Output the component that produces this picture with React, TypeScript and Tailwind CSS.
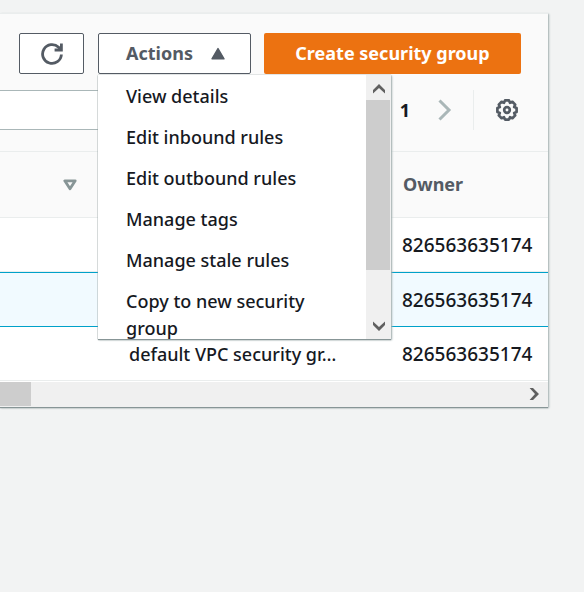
import { useState } from "react";

const menuItems = [
  "View details",
  "Edit inbound rules",
  "Edit outbound rules",
  "Manage tags",
  "Manage stale rules",
  "Copy to new security group",
];

const groups = [
  { id: 1, description: "", owner: "826563635174" },
  { id: 2, description: "", owner: "826563635174" },
  { id: 3, description: "default VPC security gr…", owner: "826563635174" },
];

const RefreshIcon = () => (
  <svg width="22" height="22" viewBox="0 0 22 22" fill="none" stroke="currentColor" strokeWidth="2.8">
    <path d="M20.4 11.5A9.4 9.4 0 1 1 17.6 4.3L20 6.8" />
    <path d="M20.4 0.5V7H13.6" />
  </svg>
);

const GearIcon = () => (
  <svg width="22" height="22" viewBox="0 0 22 22" fill="none" stroke="currentColor" strokeWidth="2.7" strokeLinejoin="round">
    <path d="M9 1.4H13L14 3.8L16.4 2.8L19.2 5.6L18.2 8L20.6 9V13L18.2 14L19.2 16.4L16.4 19.2L14 18.2L13 20.6H9L8 18.2L5.6 19.2L2.8 16.4L3.8 14L1.4 13V9L3.8 8L2.8 5.6L5.6 2.8L8 3.8Z" />
    <circle cx="11" cy="11" r="2.8" />
  </svg>
);

// arrow used on the ends of both scrollbars, points up by default
const ScrollArrow = ({ className = "" }: { className?: string }) => (
  <svg className={className} width="12" height="10" viewBox="0 0 12 10" fill="#606060">
    <path d="M6 0L12 6V9.4L6 4L0 9.4V6z" />
  </svg>
);

const ActionsMenu = () => (
  <div className="absolute left-0 top-full z-10 mt-px flex h-[264px] w-[293px] overflow-hidden bg-white shadow-[0_1px_1px_0_#879596,1px_1px_2px_0_#aab7b8,0_0_1px_0_#879596]">
    <ul role="menu" className="flex-1 overflow-hidden pt-px">
      {menuItems.map((item) => (
        <li key={item} role="none">
          <button role="menuitem" className="block w-full px-7 py-[7px] text-left text-[18px] font-medium leading-[27px] text-[#16191f]">
            {item}
          </button>
        </li>
      ))}
    </ul>
    <div className="flex w-[25px] flex-col bg-[#f0f0f0]">
      <button aria-label="Scroll up" className="grid h-[25px] place-items-center pt-0.5">
        <ScrollArrow />
      </button>
      <div className="mr-px h-[170px] bg-[#cdcdcd]" />
      <button aria-label="Scroll down" className="mt-auto grid h-[25px] place-items-center pb-px">
        <ScrollArrow className="rotate-180" />
      </button>
    </div>
  </div>
);

const App = () => {
  const [open, setOpen] = useState<boolean>(true);
  const [selected, setSelected] = useState<number>(2);

  return (
    <div className="min-h-screen bg-[#f2f3f3] pr-9 pt-[13px] font-['Noto_Sans','Open_Sans',sans-serif] text-[#16191f]">
      <section className="border-t border-[#eaeded] bg-white shadow-[0_1px_1px_0_#879596,1px_1px_2px_0_#aab7b8]">
        <header className="bg-[#fafafa] pb-[21px] pt-[19px]">
          <div className="flex justify-end pr-[27px]">
            <button aria-label="Refresh" className="mr-3.5 grid h-[41px] w-[65px] place-items-center rounded-xs border border-[#545b64] bg-white text-[#545b64]">
              <RefreshIcon />
            </button>
            <div className="relative mr-[13px]">
              <button
                aria-expanded={open}
                onClick={() => setOpen(!open)}
                className="flex h-[41px] w-[153px] items-center justify-between rounded-xs border border-[#545b64] bg-white pl-[27px] pr-6 text-[18px] font-bold text-[#545b64]"
              >
                Actions
                <svg width="16" height="14" viewBox="0 0 16 14" fill="currentColor" stroke="currentColor" strokeWidth="1.4" strokeLinejoin="round">
                  <path d="M8 1.6L14 11.8H2z" />
                </svg>
              </button>
              {open && <ActionsMenu />}
            </div>
            <button className="h-[41px] w-[257px] rounded-xs bg-[#ec7211] text-[18px] font-bold text-white">Create security group</button>
          </div>
          <div className="mt-4 flex items-center pr-[30px]">
            <input aria-label="Filter security groups" className="h-10 min-w-0 flex-1 border-y border-[#aab7b8] bg-white px-3 text-[18px]" />
            <span className="ml-6 text-[18px] font-bold">1</span>
            <button aria-label="Next page" className="ml-7 text-[#aab7b8]">
              <svg width="14" height="22" viewBox="0 0 14 22" fill="none" stroke="currentColor" strokeWidth="3">
                <path d="M1.5 1.5L11 11L1.5 20.5" />
              </svg>
            </button>
            <div className="ml-[21px] mr-[22px] h-10 w-px bg-[#eaeded]" />
            <button aria-label="Preferences" className="text-[#545b64]">
              <GearIcon />
            </button>
          </div>
        </header>
        <table className="w-full table-fixed border-separate border-spacing-0 text-left">
          <thead>
            <tr className="h-[67px] bg-[#fafafa] [&>th]:border-y [&>th]:border-[#eaeded]">
              <th className="w-[98px]">
                <button aria-label="Sort" className="ml-[63px] block text-[#879596]">
                  <svg width="14" height="12" viewBox="0 0 14 12" fill="none" stroke="currentColor" strokeWidth="2.8" strokeLinejoin="round">
                    <path d="M1.8 1.8H12.2L7 9.8z" />
                  </svg>
                </button>
              </th>
              <th />
              <th className="w-[146px] pl-px text-[18px] font-bold text-[#545b64]">Owner</th>
            </tr>
          </thead>
          <tbody>
            {groups.map((el) => (
              <tr
                key={el.id}
                onClick={() => setSelected(el.id)}
                className={
                  el.id === selected
                    ? "h-[55px] bg-[#f1faff] [&>td]:border-y [&>td]:border-[#00a1c9]"
                    : "h-[54px] [&>td]:border-b [&>td]:border-[#eaeded]"
                }
              >
                <td />
                <td className="whitespace-nowrap pl-[31px] pt-0.5 text-[18px] font-medium">{el.description}</td>
                <td className="pt-0.5 text-[19px] font-medium">{el.owner}</td>
              </tr>
            ))}
          </tbody>
        </table>
        <div className="mt-px flex h-[25px] items-stretch bg-[#f0f0f0]">
          <div className="mb-px w-[31px] bg-[#cdcdcd]" />
          <button aria-label="Scroll right" className="ml-auto grid w-7 place-items-center pb-px">
            <ScrollArrow className="rotate-90" />
          </button>
        </div>
      </section>
    </div>
  );
};

export default App;
